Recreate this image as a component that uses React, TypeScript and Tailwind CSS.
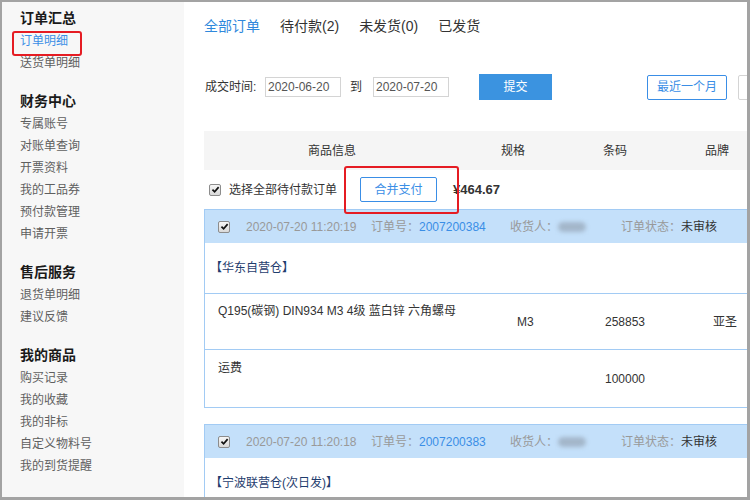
import React from 'react';

const groups = [
  { title: '订单汇总', items: ['订单明细', '送货单明细'] },
  { title: '财务中心', items: ['专属账号', '对账单查询', '开票资料', '我的工品券', '预付款管理', '申请开票'] },
  { title: '售后服务', items: ['退货单明细', '建议反馈'] },
  { title: '我的商品', items: ['购买记录', '我的收藏', '我的非标', '自定义物料号', '我的到货提醒'] },
];

function Check() {
  return (
    <span className="inline-flex h-[12px] w-[12px] shrink-0 items-center justify-center rounded-[2px] border border-[#8c8c8c] bg-gradient-to-b from-[#f6f6f6] to-[#d9d9d9]">
      <svg viewBox="0 0 10 10" className="h-[9px] w-[9px]">
        <path d="M1.6 5.1 L4 7.5 L8.5 2.3" fill="none" stroke="#111" strokeWidth="1.9" />
      </svg>
    </span>
  );
}

function Sidebar() {
  return (
    <div className="w-[182px] shrink-0 bg-[#f7f7f7] pl-[18px] pt-[4px]">
      {groups.map((g, gi) => (
        <div key={g.title} className={gi > 0 ? 'mt-[15px]' : ''}>
          <div className="h-[24px] text-[14px] font-bold leading-[24px] text-[#1a1a1a]">{g.title}</div>
          {g.items.map((item) => (
            <div key={item} className="relative h-[22px] text-[12px] leading-[22px] text-[#5f5f5f]">
              {item === '订单明细' ? (
                <>
                  <span className="text-[#3a8ee6]">{item}</span>
                  <span className="absolute -left-[8px] top-[1px] h-[25px] w-[70px] rounded-[3px] border-2 border-[#e51c23]" />
                </>
              ) : (
                item
              )}
            </div>
          ))}
        </div>
      ))}
    </div>
  );
}

type Line = { name: string; spec?: string; code?: string; brand?: string };

function Order({ time, no, warehouse, lines }: { time: string; no: string; warehouse: string; lines: Line[] }) {
  return (
    <div className="w-[600px] border border-[#a2cbf4]">
      <div className="flex h-[33px] items-center bg-[#c4e0fa] pl-[13px] text-[12px] text-[#999]">
        <Check />
        <span className="ml-[16px] w-[125px] shrink-0">{time}</span>
        <span className="w-[139px] shrink-0">
          订单号：<span className="text-[#3a8ee6]">{no}</span>
        </span>
        <span className="flex w-[111px] shrink-0 items-center">
          收货人：<span className="h-[10px] w-[28px] rounded-full bg-[#a3b6ca] blur-[2px]" />
        </span>
        <span className="shrink-0">
          订单状态：<span className="text-[#333]">未审核</span>
        </span>
      </div>
      <div className="flex h-[50px] items-center pl-[5px] text-[12px] text-[#1f3d6e]">{warehouse}</div>
      {lines.map((l, i) => (
        <div key={l.name} className={`flex border-t border-[#a2cbf4] text-[12px] text-[#333] ${i === 0 ? 'h-[56px]' : 'h-[58px]'}`}>
          <div className={`w-[312px] shrink-0 pl-[13px] leading-[14px] ${i === 0 ? 'pt-[10px]' : 'pt-[11px]'}`}>{l.name}</div>
          <div className="flex w-[88px] shrink-0 items-center">{l.spec}</div>
          <div className="flex w-[108px] shrink-0 items-center">{l.code}</div>
          <div className="flex items-center">{l.brand}</div>
        </div>
      ))}
    </div>
  );
}

export default function App() {
  return (
    <div className="flex h-[500px] w-[750px] overflow-hidden border-b-[3px] border-l-2 border-r-[3px] border-t-2 border-[#a3a3a3] bg-white [font-family:'Liberation_Sans','Noto_Sans_CJK_SC',sans-serif]">
      <Sidebar />
      <div className="min-w-0 flex-1 overflow-hidden pl-5 pt-[14px] text-[#333]">
        {/* tabs */}
        <div className="flex h-[20px] gap-5 text-[14px] leading-[20px]">
          <span className="text-[#2f88dc]">全部订单</span>
          <span>待付款(2)</span>
          <span>未发货(0)</span>
          <span>已发货</span>
        </div>

        {/* date filter */}
        <div className="mt-[38px] flex h-[26px] w-[700px] items-center text-[12px]">
          <span className="ml-px w-[60px] shrink-0">成交时间:</span>
          <span className="flex h-[20px] w-[76px] shrink-0 items-center border border-[#d4d4d4] pl-[2px] text-[#555]">2020-06-20</span>
          <span className="ml-[9px] w-[23px] shrink-0">到</span>
          <span className="flex h-[20px] w-[76px] shrink-0 items-center border border-[#d4d4d4] pl-[2px] text-[#555]">2020-07-20</span>
          <span className="ml-[30px] flex h-[26px] w-[73px] shrink-0 items-center justify-center bg-[#3b93e0] text-white">提交</span>
          <span className="ml-[95px] flex h-[25px] w-[80px] shrink-0 items-center justify-center rounded-[2px] border border-[#3a8ee6] text-[#3a8ee6]">最近一个月</span>
          <span className="ml-[11px] h-[25px] w-[80px] shrink-0 rounded-[2px] border border-[#d4d4d4]" />
        </div>

        {/* table head */}
        <div className="mt-[31px] flex h-[39px] w-[600px] items-center bg-[#f5f5f5] text-[12px] text-[#333]">
          <div className="w-[256px] shrink-0 text-center">商品信息</div>
          <div className="w-[106px] shrink-0 text-center">规格</div>
          <div className="w-[98px] shrink-0 text-center">条码</div>
          <div className="w-[106px] shrink-0 text-center">品牌</div>
        </div>

        {/* select all */}
        <div className="flex h-[39px] items-center pl-[5px] text-[12px]">
          <Check />
          <span className="ml-[8px] w-[131px] shrink-0">选择全部待付款订单</span>
          <span className="relative flex h-[25px] w-[77px] shrink-0 items-center justify-center rounded-[2px] border border-[#3a8ee6] text-[#3a8ee6]">
            合并支付
            <span className="absolute -left-[17px] -top-[12px] z-10 h-[48px] w-[115px] rounded-[3px] border-2 border-[#e51c23]" />
          </span>
          <span className="ml-[16px] text-[13px] font-bold text-[#333]">¥464.67</span>
        </div>

        <Order
          time="2020-07-20 11:20:19"
          no="2007200384"
          warehouse="【华东自营仓】"
          lines={[
            { name: 'Q195(碳钢) DIN934 M3 4级 蓝白锌 六角螺母', spec: 'M3', code: '258853', brand: '亚圣' },
            { name: '运费', code: '100000' },
          ]}
        />
        <div className="mt-4">
          <Order time="2020-07-20 11:20:18" no="2007200383" warehouse="【宁波联营仓(次日发)】" lines={[]} />
        </div>
      </div>
    </div>
  );
}
